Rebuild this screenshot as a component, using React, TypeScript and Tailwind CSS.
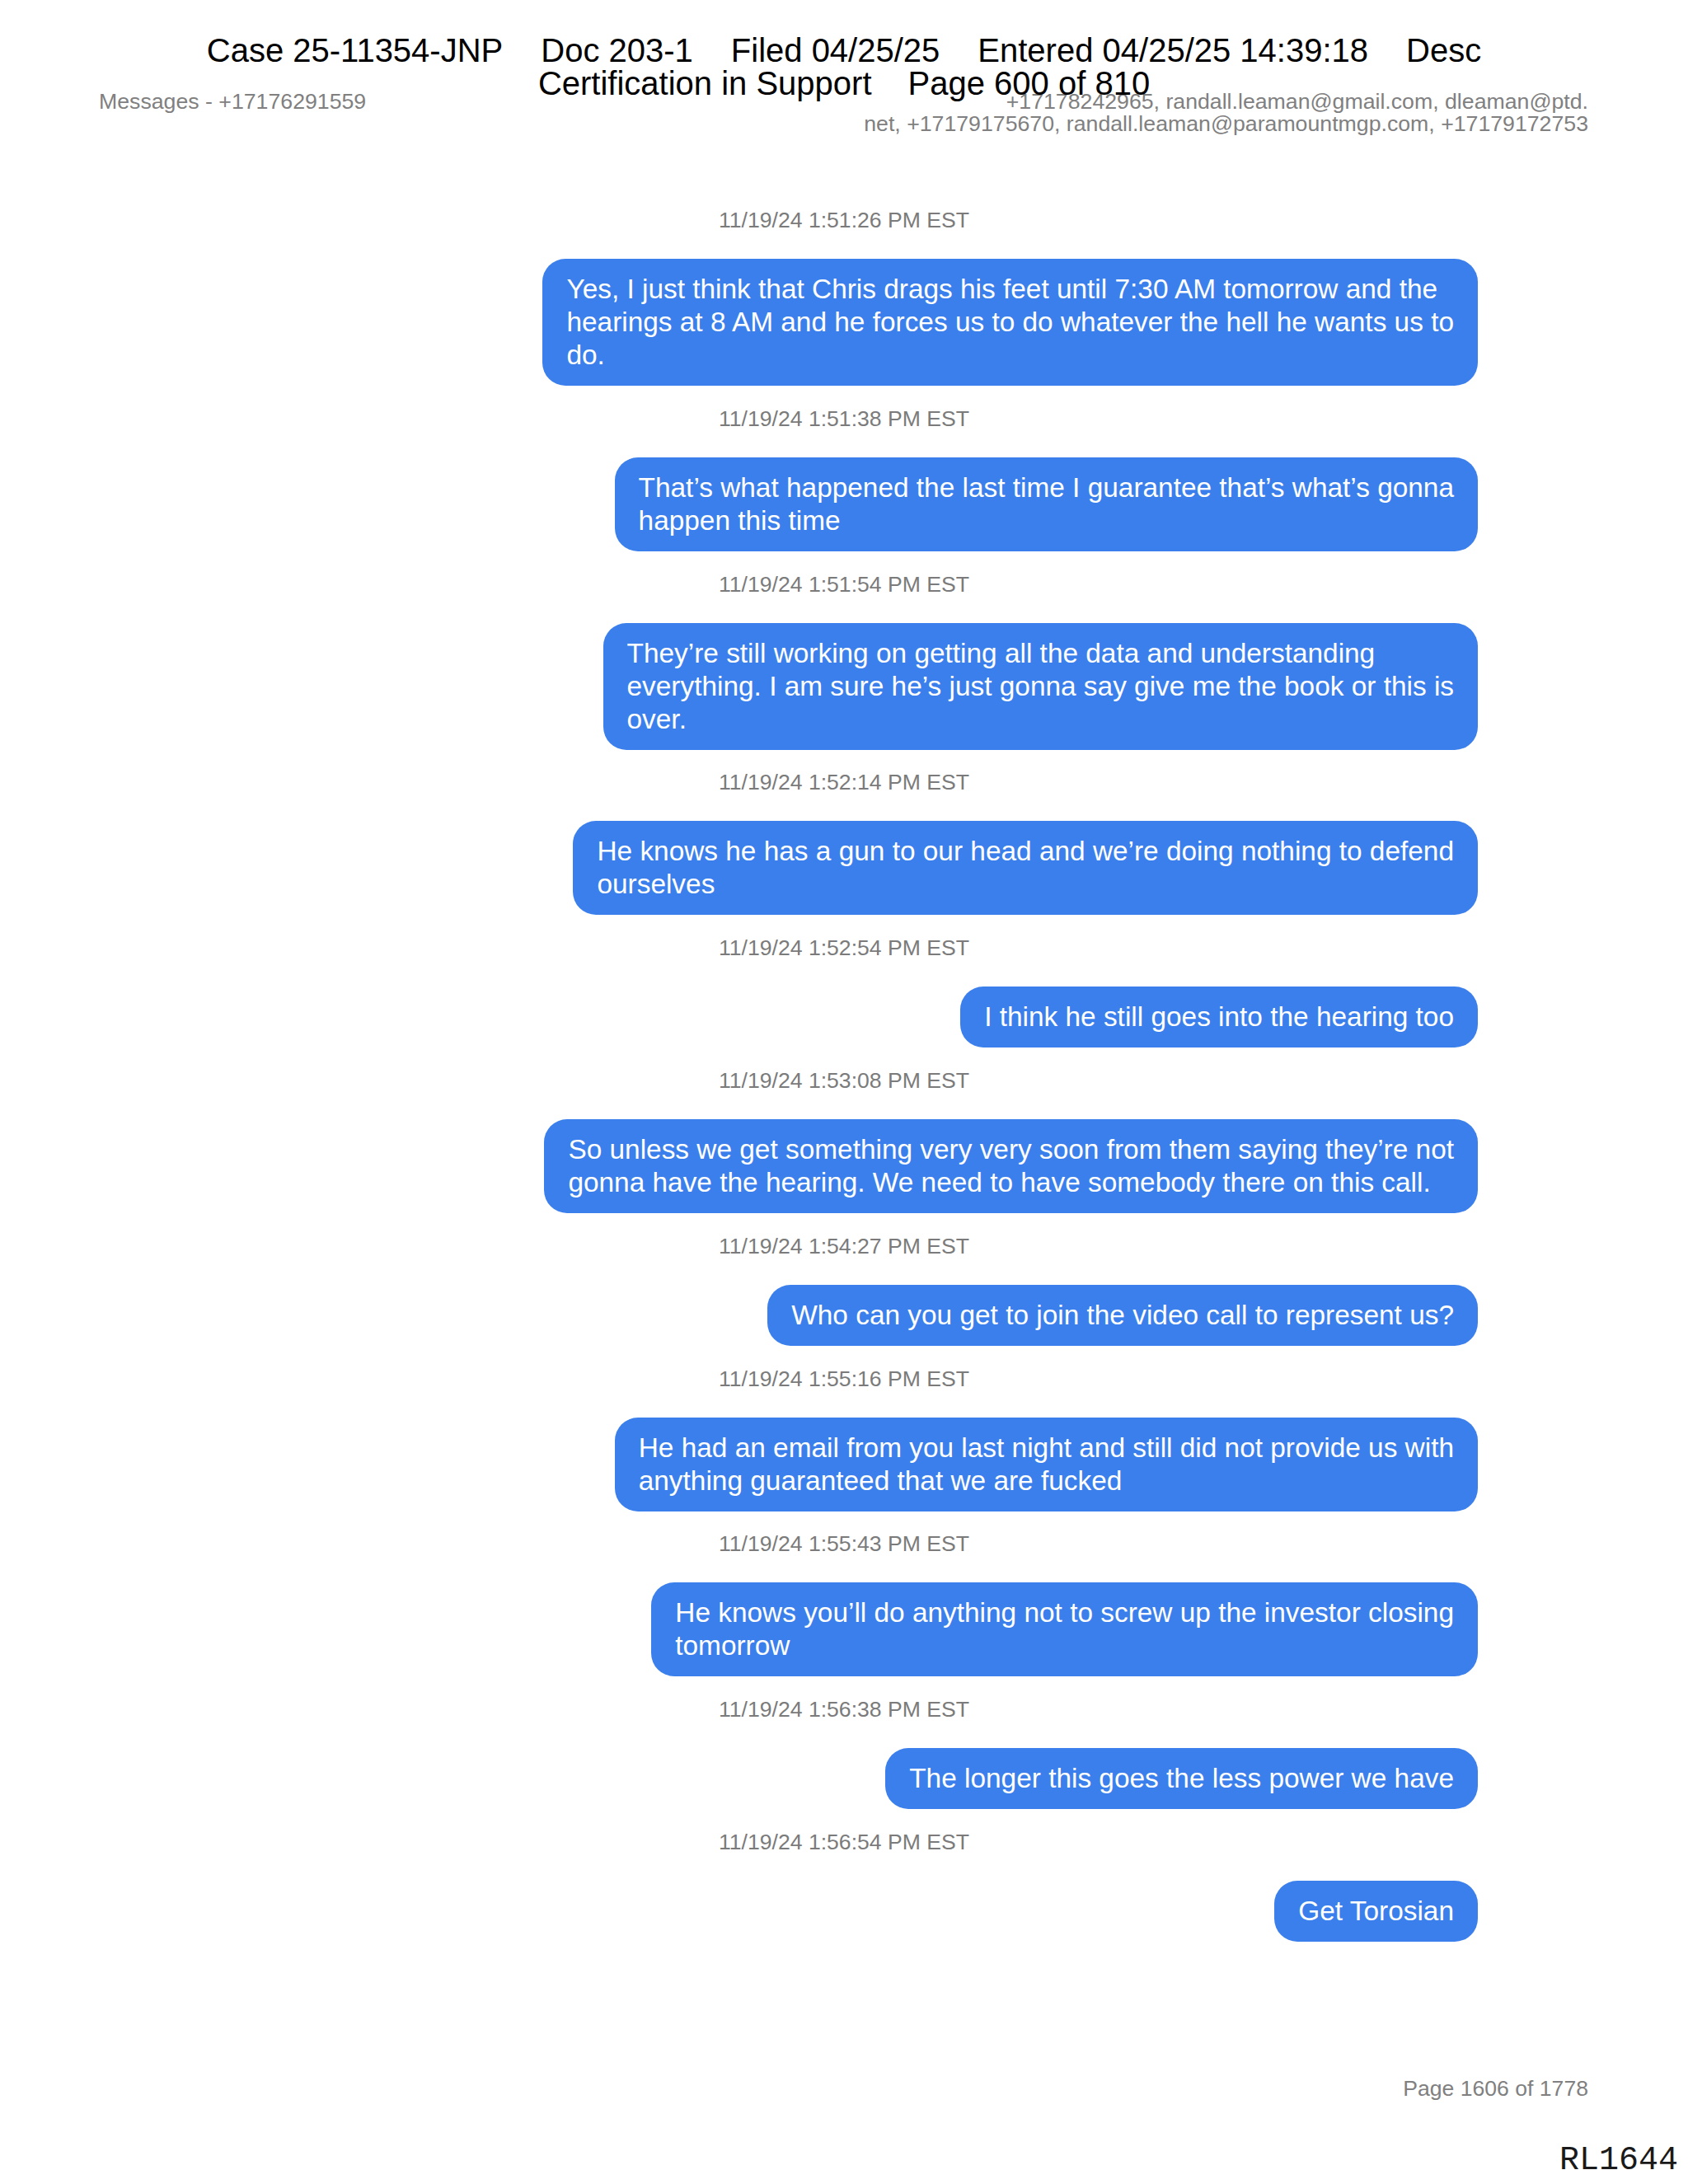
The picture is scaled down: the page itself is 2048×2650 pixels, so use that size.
import React from "react";

type Msg = { ts: string; lines: string[] };

const messages: Msg[] = [
  {
    ts: "11/19/24 1:51:26 PM EST",
    lines: [
      "Yes, I just think that Chris drags his feet until 7:30 AM tomorrow and the",
      "hearings at 8 AM and he forces us to do whatever the hell he wants us to",
      "do.",
    ],
  },
  {
    ts: "11/19/24 1:51:38 PM EST",
    lines: [
      "That\u2019s what happened the last time I guarantee that\u2019s what\u2019s gonna",
      "happen this time",
    ],
  },
  {
    ts: "11/19/24 1:51:54 PM EST",
    lines: [
      "They\u2019re still working on getting all the data and understanding",
      "everything. I am sure he\u2019s just gonna say give me the book or this is",
      "over.",
    ],
  },
  {
    ts: "11/19/24 1:52:14 PM EST",
    lines: [
      "He knows he has a gun to our head and we\u2019re doing nothing to defend",
      "ourselves",
    ],
  },
  {
    ts: "11/19/24 1:52:54 PM EST",
    lines: ["I think he still goes into the hearing too"],
  },
  {
    ts: "11/19/24 1:53:08 PM EST",
    lines: [
      "So unless we get something very very soon from them saying they\u2019re not",
      "gonna have the hearing. We need to have somebody there on this call.",
    ],
  },
  {
    ts: "11/19/24 1:54:27 PM EST",
    lines: ["Who can you get to join the video call to represent us?"],
  },
  {
    ts: "11/19/24 1:55:16 PM EST",
    lines: [
      "He had an email from you last night and still did not provide us with",
      "anything guaranteed that we are fucked",
    ],
  },
  {
    ts: "11/19/24 1:55:43 PM EST",
    lines: [
      "He knows you\u2019ll do anything not to screw up the investor closing",
      "tomorrow",
    ],
  },
  {
    ts: "11/19/24 1:56:38 PM EST",
    lines: ["The longer this goes the less power we have"],
  },
  {
    ts: "11/19/24 1:56:54 PM EST",
    lines: ["Get Torosian"],
  },
];

export default function App() {
  return (
    <div className="relative w-[2048px] h-[2650px] bg-white overflow-hidden font-['Liberation_Sans',Arial,sans-serif]">
      {/* Court filing stamp overlay */}
      <div className="absolute top-[41px] left-0 right-0 flex flex-col items-center text-black text-[40px] leading-[40px] whitespace-nowrap">
        <div className="flex gap-[46px]">
          <span>Case 25-11354-JNP</span>
          <span>Doc 203-1</span>
          <span>Filed 04/25/25</span>
          <span>Entered 04/25/25 14:39:18</span>
          <span>Desc</span>
        </div>
        <div className="flex gap-[44px]">
          <span>Certification in Support</span>
          <span>Page 600 of 810</span>
        </div>
      </div>

      {/* Export header */}
      <header className="flex justify-between items-start pt-[110px] pl-[120px] pr-[121px] text-[26.7px] leading-[27px] text-[#808080] whitespace-nowrap">
        <div>Messages - +17176291559</div>
        <div className="text-right">
          <div>+17178242965, randall.leaman@gmail.com, dleaman@ptd.</div>
          <div>net, +17179175670, randall.leaman@paramountmgp.com, +17179172753</div>
        </div>
      </header>

      {/* Conversation */}
      <main className="mt-[88px] flex flex-col">
        {messages.map((m, i) => (
          <div key={i} className="flex flex-col">
            <div className="text-center text-[26.6px] leading-[30px] text-[#7b7b7b]">{m.ts}</div>
            <div className="flex justify-end pr-[255px] mt-[32px] mb-[24.8px]">
              <div className="rounded-[28px] bg-[#3b7fec] px-[29px] py-[17px] text-white text-[33.4px] leading-[40px] whitespace-nowrap">
                {m.lines.map((l, j) => (
                  <div key={j}>{l}</div>
                ))}
              </div>
            </div>
          </div>
        ))}
      </main>

      {/* Footer */}
      <footer className="flex flex-col items-end">
        <div className="mt-[138px] pr-[121px] text-[26.6px] leading-[30px] text-[#808080]">Page 1606 of 1778</div>
        <div className="mt-[51px] pr-[12px] text-[40px] leading-[44px] text-[#1a1a1a] font-['Liberation_Mono','Courier_New',monospace]">
          RL1644
        </div>
      </footer>
    </div>
  );
}
